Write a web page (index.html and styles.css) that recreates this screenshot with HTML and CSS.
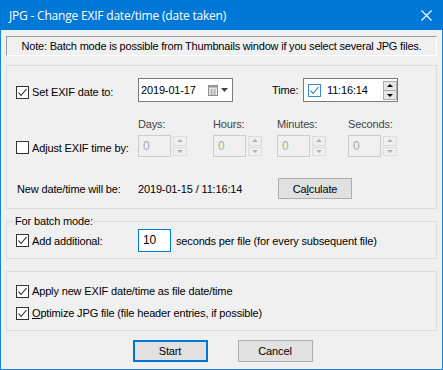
FILE: index.html
```html
<!DOCTYPE html>
<html lang="en">

<head>
	<meta charset="UTF-8">
	<meta name="viewport" content="width=device-width, initial-scale=1.0">
	<title>JPG - Change EXIF date/time (date taken)</title>
	<link rel="stylesheet" href="styles.css">
</head>

<body>
	<div class="window">
		<div class="titlebar">
			<span class="title">JPG - Change EXIF date/time (date taken)</span>
			<svg class="close" width="11" height="11" viewBox="0 0 11 11">
				<path d="M0.5 0.5 L10.5 10.5 M10.5 0.5 L0.5 10.5" stroke="#fff" stroke-width="1.1" fill="none" />
			</svg>
		</div>

		<div class="content">
			<div class="note">Note: Batch mode is possible from Thumbnails window if you select several JPG files.</div>

			<div class="group main">
				<div class="row row-date">
					<div class="lead">
						<span class="cb"><svg width="11" height="11" viewBox="0 0 11 11"><path d="M1.5 5.5 L4 8.5 L9.5 2" stroke="#222" stroke-width="1.1" fill="none" /></svg></span>
						Set EXIF date to:
					</div>
					<div class="datebox">
						<span class="datetext">2019-01-17</span>
						<svg class="calendar" width="10" height="11" viewBox="0 0 10 11">
							<rect x="0.5" y="0.5" width="9" height="10" fill="#e8e8e8" stroke="#8c8c8c" />
							<rect x="0.5" y="0.5" width="9" height="2" fill="#9a9a9a" />
							<path d="M2 5 H8 M2 7 H8 M2 9 H8 M3.5 4 V10 M6.5 4 V10" stroke="#b4b4b4" stroke-width="1" />
						</svg>
						<svg class="drop" width="7" height="4" viewBox="0 0 7 4"><path d="M0 0 H7 L3.5 4 Z" fill="#444" /></svg>
					</div>
					<span class="time-label">Time:</span>
					<div class="timebox">
						<span class="cb blue"><svg width="11" height="11" viewBox="0 0 11 11"><path d="M1.5 5.5 L4 8.5 L9.5 2" stroke="#1c6fc0" stroke-width="1.1" fill="none" /></svg></span>
						<span class="timetext">11:16:14</span>
						<span class="spin active"><span class="up"></span><span class="down"></span></span>
					</div>
				</div>

				<div class="row row-adjust">
					<div class="lead">
						<span class="cb"></span>
						Adjust EXIF time by:
					</div>
					<div class="field days">
						<span class="field-label">Days:</span>
						<div class="spinrow"><span class="numbox">0</span><span class="spin"><span class="up"></span><span class="down"></span></span></div>
					</div>
					<div class="field hours">
						<span class="field-label">Hours:</span>
						<div class="spinrow"><span class="numbox">0</span><span class="spin"><span class="up"></span><span class="down"></span></span></div>
					</div>
					<div class="field minutes">
						<span class="field-label">Minutes:</span>
						<div class="spinrow"><span class="numbox">0</span><span class="spin"><span class="up"></span><span class="down"></span></span></div>
					</div>
					<div class="field seconds">
						<span class="field-label">Seconds:</span>
						<div class="spinrow"><span class="numbox">0</span><span class="spin"><span class="up"></span><span class="down"></span></span></div>
					</div>
				</div>

				<div class="row row-result">
					<div class="lead plain">New date/time will be:</div>
					<span class="result">2019-01-15 / 11:16:14</span>
					<button class="btn calc">Ca<u>l</u>culate</button>
				</div>
			</div>

			<fieldset class="group batch">
				<legend>For batch mode:</legend>
				<div class="row row-batch">
					<div class="lead">
						<span class="cb"><svg width="11" height="11" viewBox="0 0 11 11"><path d="M1.5 5.5 L4 8.5 L9.5 2" stroke="#222" stroke-width="1.1" fill="none" /></svg></span>
						Add additional:
					</div>
					<span class="addbox">10</span>
					<span class="suffix">seconds per file (for every subsequent file)</span>
				</div>
			</fieldset>

			<div class="group options">
				<div class="option">
					<span class="cb"><svg width="11" height="11" viewBox="0 0 11 11"><path d="M1.5 5.5 L4 8.5 L9.5 2" stroke="#222" stroke-width="1.1" fill="none" /></svg></span>
					Apply new EXIF date/time as file date/time
				</div>
				<div class="option">
					<span class="cb"><svg width="11" height="11" viewBox="0 0 11 11"><path d="M1.5 5.5 L4 8.5 L9.5 2" stroke="#222" stroke-width="1.1" fill="none" /></svg></span>
					<span><u>O</u>ptimize JPG file (file header entries, if possible)</span>
				</div>
			</div>

			<div class="buttons">
				<button class="btn default">Start</button>
				<button class="btn">Cancel</button>
			</div>
		</div>
	</div>
</body>

</html>
```

FILE: styles.css
```css
* {
	box-sizing: border-box;
}

body {
	margin: 0;
	background: #f0f0f0;
	font-family: "Liberation Sans", Arial, sans-serif;
	font-size: 11px;
	letter-spacing: -0.15px;
	color: #000;
}

.window {
	width: 443px;
	height: 370px;
	border: 1px solid #1a83d8;
	border-top: none;
	background: #f0f0f0;
}

.titlebar {
	height: 30px;
	margin: 0 -1px;
	background: #0078d7;
	color: #fff;
	display: flex;
	align-items: center;
	justify-content: space-between;
	padding: 0 11px 0 9px;
	letter-spacing: normal;
}

.title {
	font-family: "Open Sans", "Noto Sans", sans-serif;
	font-size: 12px;
	letter-spacing: -0.2px;
}

.content {
	padding: 6px 5px 0 5px;
}

.note {
	height: 20px;
	border: 1px solid #a0a0a0;
	border-right-color: #fff;
	border-bottom-color: #fff;
	display: flex;
	align-items: center;
	justify-content: center;
	letter-spacing: -0.2px;
}

.group {
	border: 1px solid #dcdcdc;
	margin: 0;
}

.main {
	margin-top: 9px;
	padding: 12px 0 9px 9px;
}

.row {
	display: flex;
	align-items: center;
}

.lead {
	width: 122px;
	display: flex;
	align-items: center;
	gap: 3px;
}

.cb {
	width: 13px;
	height: 13px;
	border: 1px solid #333;
	background: #fff;
	display: inline-flex;
	align-items: center;
	justify-content: center;
	flex: none;
}

.cb.blue {
	border-color: #3c8ad6;
}

.row-date {
	height: 24px;
}

.row-date .lead {
	margin-top: 4px;
}

.datebox {
	width: 95px;
	height: 24px;
	border: 1px solid #7a7a7a;
	background: #fff;
	display: flex;
	align-items: center;
	padding-left: 2px;
}

.datetext {
	width: 67px;
}

.calendar {
	margin-top: 1px;
}

.drop {
	margin-left: 3px;
}

.time-label {
	margin-left: 39px;
	width: 31px;
}

.timebox {
	width: 95px;
	height: 24px;
	border: 1px solid #7a7a7a;
	background: #fff;
	display: flex;
	align-items: center;
	padding-left: 4px;
}

.timetext {
	margin-left: 6px;
	width: 52px;
}

.spin {
	display: flex;
	flex-direction: column;
	width: 14px;
	height: 20px;
	gap: 1px;
	margin-left: 3px;
}

.spin .up,
.spin .down {
	flex: 1;
	border: 1px solid #dcdcdc;
	background: #f0f0f0;
	position: relative;
}

.spin .up::after,
.spin .down::after {
	content: "";
	position: absolute;
	left: 50%;
	top: 50%;
	margin-left: -3px;
	border-left: 3px solid transparent;
	border-right: 3px solid transparent;
}

.spin .up::after {
	margin-top: -2px;
	border-bottom: 3px solid #b0b0b0;
}

.spin .down::after {
	margin-top: -1px;
	border-top: 3px solid #b0b0b0;
}

.spin.active {
	gap: 0;
	height: 19px;
	border: 1px solid #adadad;
	margin-left: 4px;
}

.spin.active .up,
.spin.active .down {
	border: none;
	background: #e5e5e5;
}

.spin.active .up {
	border-bottom: 1px solid #adadad;
}

.spin.active .up::after {
	border-bottom-color: #000;
}

.spin.active .down::after {
	border-top-color: #000;
}

.row-adjust {
	margin-top: 16px;
	align-items: flex-end;
}

.row-adjust .lead {
	margin-bottom: 3px;
}

.field {
	display: flex;
	flex-direction: column;
	gap: 4px;
}

.days {
	width: 75px;
}

.hours {
	width: 64px;
}

.minutes {
	width: 71px;
}

.field-label {
	line-height: 13px;
	color: #444;
}

.spinrow {
	display: flex;
	align-items: center;
}

.numbox {
	width: 33px;
	height: 22px;
	border: 1px solid #cccccc;
	color: #a8a8a8;
	font-size: 12px;
	padding: 3px 0 0 4px;
}

.spinrow .spin {
	margin-left: 2px;
}

.row-result {
	margin-top: 21px;
}

.plain {
	padding-left: 1px;
}

.result {
	width: 140px;
}

.btn {
	font-family: "Liberation Sans", Arial, sans-serif;
	font-size: 11px;
	letter-spacing: -0.15px;
	background: #e1e1e1;
	border: 1px solid #adadad;
	color: #000;
	height: 21px;
	padding: 0;
}

.calc {
	width: 74px;
}

.batch {
	margin-top: 6px;
	padding: 0 0 6px 9px;
}

.batch legend {
	margin-left: -2px;
	padding: 0 1px;
	line-height: 13px;
}

.row-batch {
	margin-top: 1px;
}

.addbox {
	width: 33px;
	height: 23px;
	border: 1px solid #0078d7;
	background: #fff;
	font-size: 12px;
	padding: 3px 0 0 4px;
}

.suffix {
	margin-left: 5px;
}

.options {
	margin-top: 12px;
	padding: 13px 0 10px 9px;
	display: flex;
	flex-direction: column;
	gap: 9px;
}

.option {
	display: flex;
	align-items: center;
	gap: 3px;
	line-height: 13px;
}

.buttons {
	margin-top: 9px;
	display: flex;
	justify-content: center;
	gap: 30px;
	padding-left: 2px;
}

.buttons .btn {
	width: 75px;
	height: 22px;
}

.btn.default {
	border: 2px solid #0078d7;
}
```
